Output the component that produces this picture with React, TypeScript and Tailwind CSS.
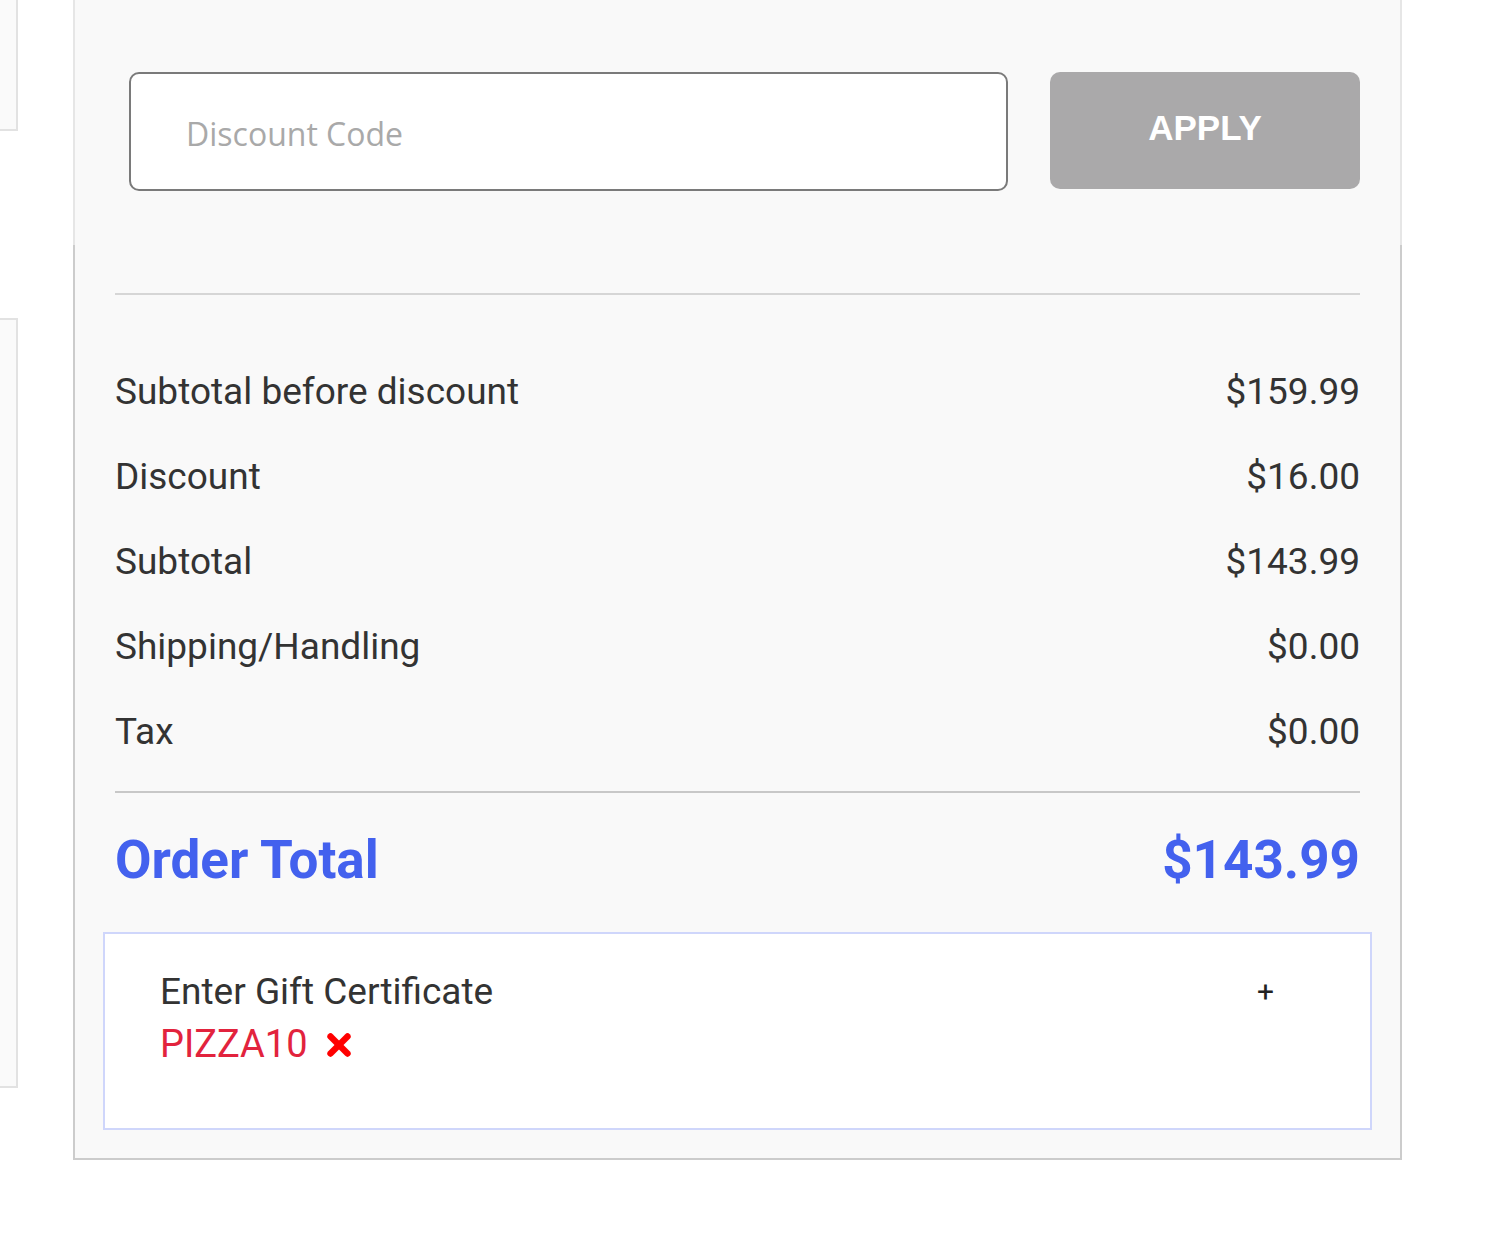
import { X } from "lucide-react";

const rows = [
  { label: "Subtotal before discount", value: "$159.99" },
  { label: "Discount", value: "$16.00" },
  { label: "Subtotal", value: "$143.99" },
  { label: "Shipping/Handling", value: "$0.00" },
  { label: "Tax", value: "$0.00" },
];

function SideCards() {
  return (
    <div className="flex w-[18px] shrink-0 flex-col">
      <div className="h-[131px] border-r-2 border-b-2 border-[#e2e2e2] bg-[#fafafa]" />
      <div className="mt-[187px] h-[770px] border-t-2 border-r-2 border-b-2 border-[#e2e2e2] bg-[#fafafa]" />
    </div>
  );
}

function DiscountForm() {
  return (
    <div className="flex h-[245px] items-start gap-[42px] border-x-2 border-[#e6e6e6] pt-[72px] pr-[40px] pl-[54px]">
      <input
        type="text"
        placeholder="Discount Code"
        className="h-[119px] w-[879px] rounded-[10px] border-2 border-[#7a7a7a] bg-white px-[55px] pt-[4px] text-[32px] text-[#333] outline-none placeholder:text-[#a9a9a9] font-['Open_Sans',sans-serif]"
      />
      <button
        type="button"
        className="flex h-[117px] flex-1 items-center justify-center rounded-[10px] bg-[#aaa9aa] pb-[4px] text-[35px] font-bold text-white font-['Liberation_Sans',Arial,sans-serif]"
      >
        APPLY
      </button>
    </div>
  );
}

function Totals() {
  return (
    <div className="border-x-2 border-b-2 border-[#cccccc] px-[40px] pt-[48px] pb-[28px]">
      <div className="h-[2px] bg-[#d6d6d6]" />
      <div className="mt-[54px] flex flex-col">
        {rows.map((row) => (
          <div
            key={row.label}
            className="flex h-[85px] items-center justify-between text-[37px] text-[#333]"
          >
            <span>{row.label}</span>
            <span>{row.value}</span>
          </div>
        ))}
      </div>
      <div className="mt-[17px] h-[2px] bg-[#c8c8c8]" />
      <div className="flex h-[139px] items-center justify-between pb-[4px] text-[53px] font-bold text-[#4361ee]">
        <span>Order Total</span>
        <span>$143.99</span>
      </div>
      <div className="-mx-[12px] h-[198px] border-2 border-[#cfd6fb] bg-white pt-[31px] pr-[96px] pl-[55px]">
        <div className="flex items-center justify-between text-[37px] leading-[53px] text-[#333]">
          <span>Enter Gift Certificate</span>
          <span className="text-[30px] text-[#222]">+</span>
        </div>
        <div className="flex items-center gap-[14px] text-[38px] leading-[53px] text-[#e2233d]">
          <span>PIZZA10</span>
          <X className="h-[34px] w-[34px] text-[#ff0000]" strokeWidth={4.5} />
        </div>
      </div>
    </div>
  );
}

export default function App() {
  return (
    <div className="flex min-h-[1237px] bg-white font-['Roboto',sans-serif]">
      <SideCards />
      <div className="ml-[55px] flex w-[1329px] shrink-0 flex-col self-start bg-[#f9f9f9]">
        <DiscountForm />
        <Totals />
      </div>
    </div>
  );
}
